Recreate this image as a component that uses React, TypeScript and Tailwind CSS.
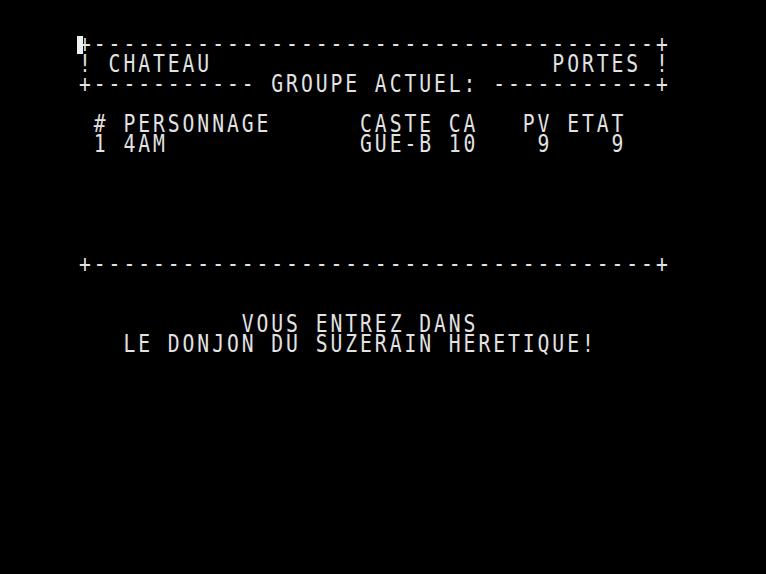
import React from "react";

const dash38 = "-".repeat(38);
const lines: string[] = [
  "+" + dash38 + "+",
  "! CHATEAU" + " ".repeat(23) + "PORTES !",
  "+----------- GROUPE ACTUEL: -----------+",
  "",
  " # PERSONNAGE" + " ".repeat(6) + "CASTE CA   PV ETAT",
  " 1 4AM" + " ".repeat(13) + "GUE-B 10    9    9",
  "",
  "",
  "",
  "",
  "",
  "+" + dash38 + "+",
  "",
  "",
  " ".repeat(11) + "VOUS ENTREZ DANS",
  "   LE DONJON DU SUZERAIN HERETIQUE!",
];

export default function App() {
  return (
    <div className="relative h-[574px] w-[766px] overflow-hidden bg-black">
      <div className="flex flex-col pl-[79px] pt-[34px] font-['DejaVu_Sans_Mono',monospace] text-[24px] leading-[20px] tracking-[3.59px] text-[#e2e2e2]">
        {lines.map((l, i) => (
          <div key={i} className="h-[20px] origin-left scale-x-[0.82] whitespace-pre">
            {l}
          </div>
        ))}
      </div>
      <div className="absolute left-[77px] top-[36px] h-[18px] w-[6px] bg-[#f0f0f0]" />
    </div>
  );
}
